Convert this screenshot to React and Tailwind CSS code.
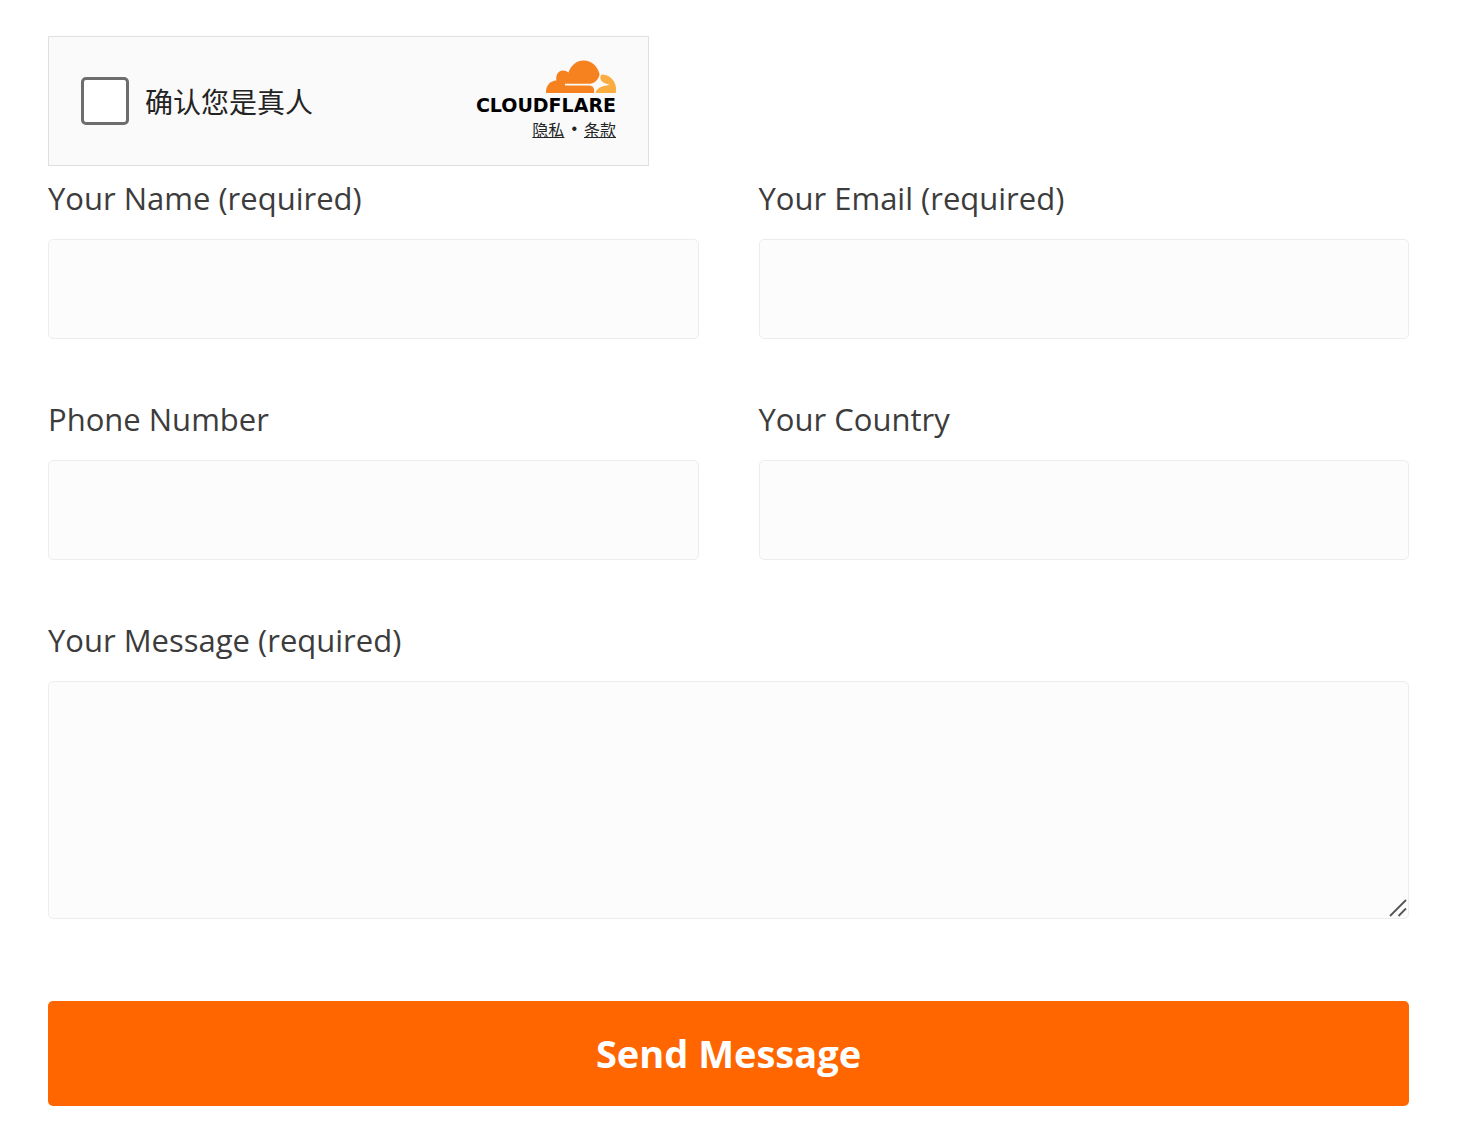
import React from 'react';

const inputClass =
    'block w-full rounded-[5px] border border-[#ededed] bg-[#fcfcfc] px-6 text-[31px] text-[#3c3c3c] outline-none focus:border-gray-400';

// Label with its text box underneath
const Field = ({ id, label, type = 'text', required = false }) => (
    <div>
        <label htmlFor={id} className="mb-4 block leading-[49px]">{label}</label>
        <input id={id} name={id} type={type} required={required} className={`${inputClass} h-[100px]`} />
    </div>
);

const CloudIcon = () => (
    <svg className="h-[33px] w-[70px]" viewBox="0 0 70 33" aria-hidden="true">
        <path
            fill="#f6821f"
            d="M0 33 C-.4 26 4 20.8 10.4 20.6 C9.4 14.8 12.6 10.6 17 10.6 C19.2 10.6 21 11.3 22.4 12.6 C25 5 30.8.4 37.6.4 C45.6.4 51.6 6 53.4 13.6 C54 17 52.4 21 50 24 L48.6 33 Z"
        />
        <path
            fill="#fbad41"
            d="M54.6 15.4 C55.6 14.5 56.8 14.5 58 14.7 C65 15.8 70.2 22 70 29 L69.8 33 L49.2 33 L52 25 Z"
        />
        {/* Sparkle and highlight line */}
        <path
            fill="#fafafa"
            d="M19 23.8 H44 C48.4 23.4 52 20.2 53.2 15.6 H54.4 C53.8 20 55.6 23.2 63 24.4 V25 C55.4 25.8 50.6 28.4 49.4 33 H48 C48.8 28.6 47.4 25.6 43 25.4 H19 Z"
        />
    </svg>
);

const Turnstile = () => (
    <div className="flex h-[130px] w-full max-w-[601px] items-center justify-between border border-[#e0e0e0] bg-[#fafafa] px-8 font-['Noto_Sans_CJK_SC',sans-serif] text-[#232323]">
        <label className="flex items-center gap-4 text-[28px] leading-10">
            <input
                type="checkbox"
                name="human"
                className="size-12 shrink-0 appearance-none rounded-[5px] border-[3px] border-[#6d6d6d] bg-white checked:bg-[#c44d0e]"
            />
            确认您是真人
        </label>
        <div className="flex flex-col items-end pb-0.5">
            <CloudIcon />
            <span className="font-['DejaVu_Sans',sans-serif] text-[19px] leading-6 font-bold text-black">CLOUDFLARE</span>
            <div className="flex gap-[7px] text-[16px] leading-6">
                <a href="#privacy" className="underline">隐私</a>
                <span className="font-['Liberation_Sans',sans-serif]">•</span>
                <a href="#terms" className="underline">条款</a>
            </div>
        </div>
    </div>
);

export default function App() {
    return (
        <form
            className="bg-white pt-9 pr-14 pb-10 pl-12 font-['Open_Sans','Noto_Sans_CJK_SC',sans-serif] text-[31px] text-[#3c3c3c]"
            onSubmit={(e) => e.preventDefault()}
        >
            <Turnstile />
            <div className="mt-2 grid grid-cols-2 gap-x-[60px] gap-y-14">
                <Field id="name" label="Your Name (required)" required />
                <Field id="email" label="Your Email (required)" type="email" required />
                <Field id="phone" label="Phone Number" type="tel" />
                <Field id="country" label="Your Country" />
                <div className="col-span-2">
                    <label htmlFor="message" className="mb-4 block leading-[49px]">Your Message (required)</label>
                    <div className="relative">
                        <textarea id="message" name="message" required className={`${inputClass} h-[238px] resize-none py-4`} />
                        <svg
                            className="pointer-events-none absolute right-[2px] bottom-[2px] size-[18px]"
                            viewBox="0 0 18 18"
                            fill="none"
                            stroke="#555"
                            strokeWidth="1.8"
                            aria-hidden="true"
                        >
                            <path d="M1 17 L17 1 M9.5 17 L17 9.5" />
                        </svg>
                    </div>
                </div>
            </div>
            <button
                type="submit"
                className="mt-[82px] h-[105px] w-full rounded-[5px] bg-[#ff6600] text-[38px] font-bold text-white"
            >
                Send Message
            </button>
        </form>
    );
}
